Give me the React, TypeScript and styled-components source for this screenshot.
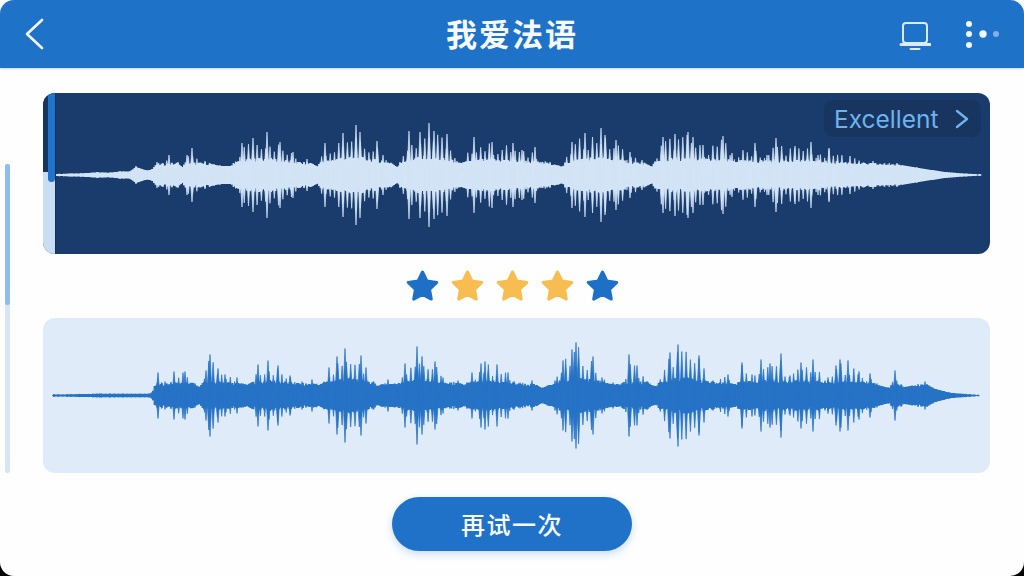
import React from 'react'
import styled, { createGlobalStyle } from 'styled-components'

type Peak = [number, number]

const modelPeaks: Peak[] = [
  [55, 1], [70, 1.5], [85, 2], [97, 3], [110, 2.5], [120, 4], [130, 4], [136, 9], [146, 5], [152, 6], [157, 13], [169, 20], [178, 13], [183, 8], [187, 20], [192, 27], [205, 14], [220, 10], [232, 10], [242, 32], [253, 37], [267, 43], [280, 33], [293, 23], [307, 16], [318, 9], [325, 32], [343, 42], [356, 50], [360, 43], [377, 34], [383, 20], [398, 8], [409, 44], [420, 43], [429, 52], [434, 44], [447, 41], [457, 14], [463, 13], [474, 38], [492, 33], [513, 32], [522, 25], [535, 28], [550, 13], [563, 9], [572, 33], [585, 42], [601, 47], [605, 40], [616, 35], [630, 23], [642, 15], [652, 9], [663, 38], [675, 41], [688, 43], [693, 38], [703, 30], [723, 39], [732, 22], [755, 32], [767, 20], [776, 37], [795, 29], [811, 33], [818, 20], [829, 27], [850, 19], [873, 14], [897, 12], [917, 8], [947, 3], [980, 0.5],
]

const userPeaks: Peak[] = [
  [54, 1], [100, 2], [150, 2], [153, 5], [158, 23], [165, 14], [174, 24], [185, 24], [195, 12], [200, 9], [206, 25], [210, 41], [218, 27], [225, 21], [237, 18], [248, 11], [258, 31], [268, 35], [278, 30], [290, 20], [302, 14], [312, 16], [320, 11], [329, 28], [337, 39], [345, 47], [361, 40], [366, 28], [377, 10], [388, 16], [398, 12], [405, 32], [417, 49], [422, 39], [435, 34], [443, 18], [458, 15], [465, 11], [472, 23], [481, 32], [485, 34], [497, 31], [508, 23], [520, 13], [532, 15], [542, 8], [555, 15], [563, 35], [572, 46], [576, 53], [593, 39], [602, 18], [613, 13], [622, 12], [629, 41], [637, 30], [650, 12], [657, 10], [670, 43], [678, 51], [699, 40], [704, 27], [713, 15], [728, 21], [737, 11], [742, 33], [752, 21], [761, 36], [770, 32], [781, 42], [790, 20], [801, 33], [813, 36], [825, 15], [836, 30], [840, 36], [848, 35], [859, 24], [870, 22], [877, 12], [890, 8], [895, 25], [903, 9], [925, 14], [933, 8], [950, 3], [978, 0.5],
]

const peakAt = (peaks: Peak[], x: number) => {
  for (let i = 1; i < peaks.length; i++) {
    const [x0, a0] = peaks[i - 1]
    const [x1, a1] = peaks[i]
    if (x <= x1) return a0 + ((a1 - a0) * (x - x0)) / (x1 - x0)
  }
  return 0
}

const jitter = (i: number) => {
  const v = Math.sin(i * 12.9898) * 43758.5453
  return v - Math.floor(v)
}

// mean of the spikes around x, so the solid middle doesn't follow each spike
const smoothAt = (peaks: Peak[], x: number) => {
  let sum = 0
  let n = 0
  for (let dx = -16; dx <= 16; dx += 4) {
    sum += peakAt(peaks, x + dx)
    n++
  }
  return sum / n
}

// one spike: widest around the middle, narrowing to a point at both ends
const spike = (x: number, cy: number, a: number) => {
  const w = 1.2
  const shoulder = a * 0.4
  return (
    `M${x.toFixed(1)} ${(cy - a).toFixed(1)}` +
    `L${(x + w).toFixed(1)} ${(cy - shoulder).toFixed(1)}` +
    `V${(cy + shoulder).toFixed(1)}` +
    `L${x.toFixed(1)} ${(cy + a).toFixed(1)}` +
    `L${(x - w).toFixed(1)} ${(cy + shoulder).toFixed(1)}` +
    `V${(cy - shoulder).toFixed(1)}Z`
  )
}

const spikesPath = (peaks: Peak[], cy: number) => {
  let d = ''
  peaks.forEach(([x, a]) => {
    d += spike(x, cy, a)
  })
  const start = peaks[0][0]
  const end = peaks[peaks.length - 1][0]
  for (let x = start, i = 0; x < end; x += 4.3, i++) {
    const a = peakAt(peaks, x) * (0.58 + 0.38 * jitter(i))
    d += spike(x, cy, a)
  }
  return d
}

// the solid middle, drawn as close short bars so that its edge stays rough
const bodyPath = (peaks: Peak[], cy: number) => {
  const start = peaks[0][0]
  const end = peaks[peaks.length - 1][0]
  let d = ''
  for (let x = start, i = 0; x <= end; x += 1.5, i++) {
    const p = peakAt(peaks, x)
    const s = smoothAt(peaks, x)
    const a = Math.min(p * 0.9, (s * 0.2 + 8) * (0.88 + 0.24 * jitter(i + 50)))
    d += `M${x.toFixed(1)} ${(cy - a).toFixed(1)}V${(cy + a).toFixed(1)}`
  }
  return d
}

const STAR =
  'M18.5 4 L22.85 13 L32.8 14.4 L25.5 21.3 L27.3 31.1 L18.5 26.4 L9.7 31.1 L11.5 21.3 L4.2 14.4 L14.15 13 Z'

const GlobalStyle = createGlobalStyle`
  html, body {
    margin: 0;
    height: 100%;
    background: linear-gradient(#ffffff 50%, #000000 50%);
    overflow: hidden;
  }
`

const Screen = styled.div`
  width: 1024px;
  height: 576px;
  display: flex;
  flex-direction: column;
  background: #fefefe;
  border-radius: 14px;
  overflow: hidden;
  font-family: "Noto Sans CJK SC", "Noto Sans", sans-serif;
`

const Header = styled.header`
  height: 68px;
  flex: none;
  display: grid;
  grid-template-columns: 1fr auto 1fr;
  align-items: center;
  padding: 0 24px;
  background: #1e72c8;
  box-shadow: 0 1px 2px rgba(30, 90, 160, 0.25);
`

const Title = styled.h1`
  margin: 0;
  padding-bottom: 4px;
  font-size: 31px;
  font-weight: 700;
  letter-spacing: 2px;
  color: #f6faff;
`

const HeaderIcons = styled.div`
  display: flex;
  align-items: center;
  justify-content: flex-end;
  gap: 35px;
`

const Body = styled.main`
  flex: 1;
  display: flex;
`

const ScrollTrack = styled.div`
  width: 5px;
  height: 309px;
  margin: 96px 33px 0 5px;
  flex: none;
  border-radius: 2px;
  background: #d6e6f8;
`

const ScrollThumb = styled.div`
  height: 141px;
  border-radius: 2px;
  background: #8fbdee;
`

const Content = styled.div`
  width: 947px;
  padding-top: 25px;
  display: flex;
  flex-direction: column;
  align-items: center;
`

const ModelPanel = styled.section`
  position: relative;
  width: 100%;
  height: 161px;
  display: flex;
  border-radius: 12px;
  overflow: hidden;
  background: #193c6d;
`

const Rail = styled.div`
  width: 12px;
  flex: none;
  display: flex;
  flex-direction: column;
  border-right: 1px solid #14305a;
`

const RailTop = styled.div`
  height: 79px;
  background: #17355f;
`

const RailBottom = styled.div`
  flex: 1;
  background: #c9ddf3;
`

const Playhead = styled.div`
  position: absolute;
  left: 5px;
  top: 0;
  width: 7px;
  height: 89px;
  border-radius: 0 0 4px 4px;
  background: #1f74cc;
`

const Badge = styled.div`
  position: absolute;
  top: 7px;
  right: 9px;
  width: 157px;
  height: 37px;
  box-sizing: border-box;
  padding: 0 12px 0 10px;
  display: flex;
  align-items: center;
  justify-content: space-between;
  border-radius: 9px;
  background: #18355f;
  color: #6fb2ee;
  font-family: Inter, "Noto Sans", sans-serif;
  font-size: 24.5px;
`

const Stars = styled.div`
  height: 64px;
  margin-right: 9px;
  display: flex;
  align-items: center;
  gap: 8px;
`

const UserPanel = styled.section`
  width: 100%;
  height: 155px;
  border-radius: 12px;
  background: #dfebf9;
`

const Wave = styled.svg`
  display: block;
`

const RetryButton = styled.button`
  width: 240px;
  height: 54px;
  margin: 24px 9px 0 0;
  border: 0;
  padding: 0 0 2px;
  border-radius: 27px;
  background: #1f72c8;
  box-shadow: 0 3px 8px rgba(50, 130, 220, 0.28);
  color: #f8fbff;
  font-family: "Noto Sans CJK SC", "Noto Sans", sans-serif;
  font-size: 24px;
  font-weight: 500;
  letter-spacing: 1.5px;
`

const Star = ({ gold }: { gold?: boolean }) => (
  <svg width="37" height="37" viewBox="0 0 37 37">
    <path
      d={STAR}
      fill={gold ? '#f7bd50' : '#1e70c6'}
      stroke={gold ? '#f7bd50' : '#1e70c6'}
      strokeWidth="3"
      strokeLinejoin="round"
    />
  </svg>
)

const Waveform = ({ peaks, cy, color }: { peaks: Peak[]; cy: number; color: string }) => (
  <>
    <path d={bodyPath(peaks, cy)} fill="none" stroke={color} strokeWidth="1.8" />
    <path d={spikesPath(peaks, cy)} fill={color} stroke={color} strokeWidth="0.7" strokeLinejoin="round" />
  </>
)

const App = () => {
  return (
    <>
      <GlobalStyle />
      <Screen>
        <Header>
          <svg width="24" height="32" viewBox="0 0 24 32">
            <path d="M18 2 L3 16 L18 30" fill="none" stroke="#f4f9ff" strokeWidth="2.6" strokeLinecap="round" strokeLinejoin="round" />
          </svg>
          <Title>我爱法语</Title>
          <HeaderIcons>
            <svg width="32" height="32" viewBox="0 0 32 32">
              <rect x="4" y="5" width="24" height="20" rx="3" fill="none" stroke="#dcebfb" strokeWidth="2" />
              <path d="M2 26.5 H31" stroke="#dcebfb" strokeWidth="3" strokeLinecap="round" />
              <path d="M11.5 31 H20.5" stroke="#dcebfb" strokeWidth="2" strokeLinecap="round" />
            </svg>
            <svg width="34" height="32" viewBox="0 0 34 32">
              <circle cx="3" cy="6" r="3" fill="#f1f7ff" />
              <circle cx="3" cy="16" r="3" fill="#f1f7ff" />
              <circle cx="3" cy="27" r="3" fill="#f1f7ff" />
              <circle cx="17" cy="16" r="3.7" fill="#f1f7ff" />
              <circle cx="30" cy="16" r="3" fill="#7fb1e8" />
            </svg>
          </HeaderIcons>
        </Header>
        <Body>
          <ScrollTrack>
            <ScrollThumb />
          </ScrollTrack>
          <Content>
            <ModelPanel>
              <Rail>
                <RailTop />
                <RailBottom />
              </Rail>
              <Wave width="934" height="161" viewBox="56 93 934 161">
                <Waveform peaks={modelPeaks} cy={175} color="#d3e4f7" />
              </Wave>
              <Playhead />
              <Badge>
                Excellent
                <svg width="14" height="20" viewBox="0 0 14 20">
                  <path d="M2 2 L12 10 L2 18" fill="none" stroke="#6fb2ee" strokeWidth="2.4" strokeLinecap="round" strokeLinejoin="round" />
                </svg>
              </Badge>
            </ModelPanel>
            <Stars>
              <Star />
              <Star gold />
              <Star gold />
              <Star gold />
              <Star />
            </Stars>
            <UserPanel>
              <Wave width="947" height="155" viewBox="43 318 947 155">
                <Waveform peaks={userPeaks} cy={395.5} color="#2673c6" />
              </Wave>
            </UserPanel>
            <RetryButton>再试一次</RetryButton>
          </Content>
        </Body>
      </Screen>
    </>
  )
}

export default App
